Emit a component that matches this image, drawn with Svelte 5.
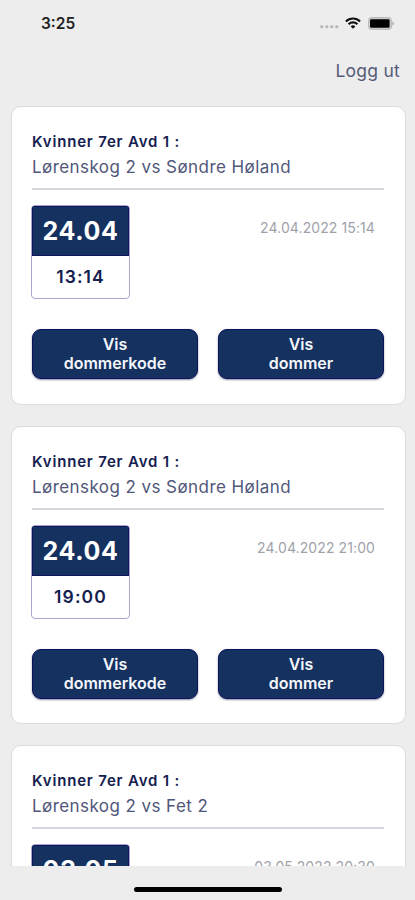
<script lang="ts">
  interface Match {
    division: string;
    teams: string;
    date: string;
    time: string;
    deadline: string;
  }

  const matches: Match[] = [
    {
      division: 'Kvinner 7er Avd 1 :',
      teams: 'Lørenskog 2 vs Søndre Høland',
      date: '24.04',
      time: '13:14',
      deadline: '24.04.2022 15:14',
    },
    {
      division: 'Kvinner 7er Avd 1 :',
      teams: 'Lørenskog 2 vs Søndre Høland',
      date: '24.04',
      time: '19:00',
      deadline: '24.04.2022 21:00',
    },
    {
      division: 'Kvinner 7er Avd 1 :',
      teams: 'Lørenskog 2 vs Fet 2',
      date: '03.05',
      time: '18:30',
      deadline: '03.05.2022 20:30',
    },
  ];
</script>

<div class="screen">
  <div class="status-bar">
    <span class="clock">3:25</span>
    <div class="status-icons">
      <svg class="signal" width="19" height="4" viewBox="0 0 19 4" fill="#b9b9bb">
        <rect x="0.3" y="0.2" width="3" height="3" rx="1" />
        <rect x="5.3" y="0.2" width="3" height="3" rx="1" />
        <rect x="10.3" y="0.2" width="3" height="3" rx="1" />
        <rect x="15.3" y="0.2" width="3" height="3" rx="1" />
      </svg>
      <svg class="wifi" width="16" height="12" viewBox="0 0 16 12" fill="none" stroke="#111" stroke-width="2.1">
        <path d="M0.9 4.4 A10.2 10.2 0 0 1 15.1 4.4" />
        <path d="M3.6 7.2 A6.3 6.3 0 0 1 12.4 7.2" />
        <path d="M8 11.7 L5.7 9.4 A3.3 3.3 0 0 1 10.3 9.4 Z" fill="#111" stroke="none" />
      </svg>
      <svg class="battery" width="26" height="13" viewBox="0 0 26 13">
        <rect x="0.6" y="0.6" width="22.8" height="11.8" rx="3.4" fill="#ccc" stroke="#bdbdbd" stroke-width="1.2" />
        <rect x="2" y="2.2" width="19.6" height="8.6" rx="1.4" fill="#000" />
        <path d="M24.4 4.4 Q26 5 26 6.5 Q26 8 24.4 8.6 Z" fill="#aaa" />
      </svg>
    </div>
  </div>

  <header class="top-bar">
    <button class="logout">Logg ut</button>
  </header>

  <main class="match-list">
    {#each matches as match}
      <article class="card">
        <h2 class="division">{match.division}</h2>
        <p class="teams">{match.teams}</p>
        <div class="info">
          <div class="date-box">
            <div class="date">{match.date}</div>
            <div class="time">{match.time}</div>
          </div>
          <span class="deadline">{match.deadline}</span>
        </div>
        <div class="actions">
          <button class="action">Vis<br />dommerkode</button>
          <button class="action">Vis<br />dommer</button>
        </div>
      </article>
    {/each}
  </main>

  <footer class="home-area">
    <div class="home-indicator"></div>
  </footer>
</div>

<style>
  .screen {
    display: flex;
    flex-direction: column;
    width: 415px;
    height: 900px;
    overflow: hidden;
    background-color: #ededed;
    font-family: Inter, 'Liberation Sans', sans-serif;
    color: #14204f;
  }

  .status-bar {
    display: flex;
    flex: none;
    justify-content: space-between;
    align-items: center;
    height: 46px;
    padding: 0 20px 0 41px;
    box-sizing: border-box;
  }

  .clock {
    font-size: 15.5px;
    font-weight: 600;
    color: #222;
  }

  .status-icons {
    display: flex;
    align-items: center;
  }

  .signal {
    margin: 8px 6px 0 0;
  }

  .wifi {
    margin-right: 7px;
  }

  .battery {
    margin-right: 1px;
  }

  .top-bar {
    display: flex;
    flex: none;
    justify-content: flex-end;
    align-items: center;
    height: 50px;
    padding-right: 15px;
  }

  .logout {
    padding: 0;
    border: none;
    background: none;
    font: 400 17.5px/20px Inter, 'Liberation Sans', sans-serif;
    letter-spacing: 0.25px;
    color: #565b78;
  }

  .match-list {
    display: flex;
    flex: 1;
    flex-direction: column;
    gap: 21px;
    min-height: 0;
    padding: 10.4px 9.5px 0 10.5px;
    overflow: hidden;
  }

  .card {
    flex: none;
    height: 298.5px;
    padding: 23.7px 20.5px 0;
    box-sizing: border-box;
    border: 1px solid #dcdcde;
    border-radius: 10px;
    background-color: #fff;
  }

  .division {
    margin: 0;
    font-size: 15px;
    font-weight: 600;
    line-height: 22px;
    letter-spacing: 0.82px;
  }

  .teams {
    margin: 0;
    padding: 3.4px 0 10px;
    border-bottom: 2px solid #d3d6dc;
    font-size: 17px;
    font-weight: 400;
    line-height: 22px;
    letter-spacing: 0.43px;
    color: #51567a;
  }

  .info {
    display: flex;
    justify-content: space-between;
    align-items: flex-start;
    padding: 15px 9px 0 0;
  }

  .date-box {
    width: 99px;
    height: 94px;
    margin-left: -1px;
    box-sizing: border-box;
    border: 1px solid #aaa5d0;
    border-radius: 4px;
    overflow: hidden;
    text-align: center;
  }

  .date {
    height: 50px;
    background-color: #14315f;
    box-shadow: inset 0 0 0 1px #0c1560;
    font-size: 25px;
    font-weight: 700;
    line-height: 51px;
    letter-spacing: 0.6px;
    color: #fff;
  }

  .time {
    font-size: 17.5px;
    font-weight: 600;
    line-height: 42px;
    letter-spacing: 1.1px;
  }

  .deadline {
    padding-top: 13px;
    font-size: 14px;
    font-weight: 400;
    line-height: 20px;
    letter-spacing: 0.1px;
    color: #a0a2aa;
  }

  .actions {
    display: flex;
    gap: 20px;
    padding-top: 29.6px;
  }

  .action {
    flex: 1;
    height: 50px;
    padding: 0;
    border: 1px solid #0b1259;
    border-radius: 9px;
    background-color: #14315f;
    box-shadow: 0 1px 2px rgba(20, 32, 79, 0.5);
    font: 600 16px/19px Inter, 'Liberation Sans', sans-serif;
    color: #f4f6fb;
  }

  .home-area {
    display: flex;
    flex: none;
    justify-content: center;
    height: 34px;
    padding-top: 21px;
    box-sizing: border-box;
  }

  .home-indicator {
    width: 148px;
    height: 5px;
    border-radius: 3px;
    background-color: #000;
  }
</style>
